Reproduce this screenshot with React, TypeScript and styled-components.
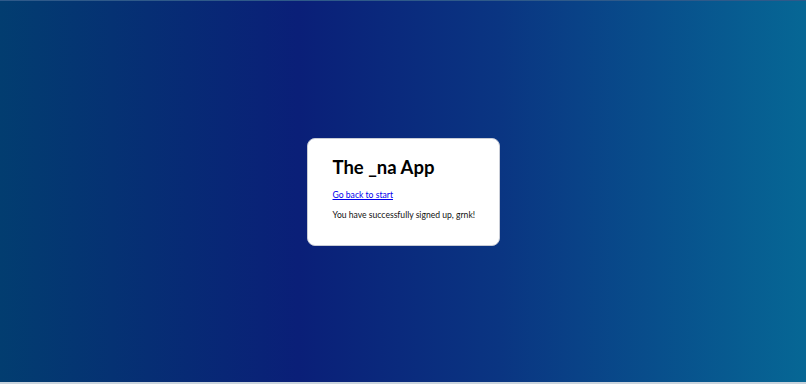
import React from "react";
import styled, { createGlobalStyle } from "styled-components";

const Global = createGlobalStyle`
  html, body { margin: 0; padding: 0; }
  body {
    font-family: Lato, "Noto Sans", sans-serif;
    background: #c9d3dc;
  }
`;

const Page = styled.div`
  height: 382px;
  box-sizing: border-box;
  border-top: 1px solid #2f5a8a;
  background: linear-gradient(to right, #023d70 0%, #0a1f78 37%, #0a3582 62%, #066795 100%);
  display: flex;
  align-items: center;
  justify-content: center;
`;

const Card = styled.div`
  background: #ffffff;
  border: 1px solid #c8ccd6;
  border-radius: 8px;
  padding: 16px 25px 23px 25px;
  width: 193px;
  box-sizing: border-box;
`;

const Title = styled.h1`
  margin: 0 0 9px 0;
  font-size: 18.5px;
  font-weight: 700;
  color: #000;
  line-height: 25px;
`;

const Link = styled.a`
  display: block;
  font-size: 8.6px;
  color: #0000ee;
  text-decoration: underline;
  line-height: 13px;
  margin-bottom: 7px;
`;

const Message = styled.p`
  margin: 0;
  font-size: 8.6px;
  line-height: 13px;
  color: #111;
  white-space: nowrap;
`;

export default function App() {
  return (
    <>
      <Global />
      <Page>
        <Card>
          <Title>The _na App</Title>
          <Link href="#">Go back to start</Link>
          <Message>You have successfully signed up, grnk!</Message>
        </Card>
      </Page>
    </>
  );
}
